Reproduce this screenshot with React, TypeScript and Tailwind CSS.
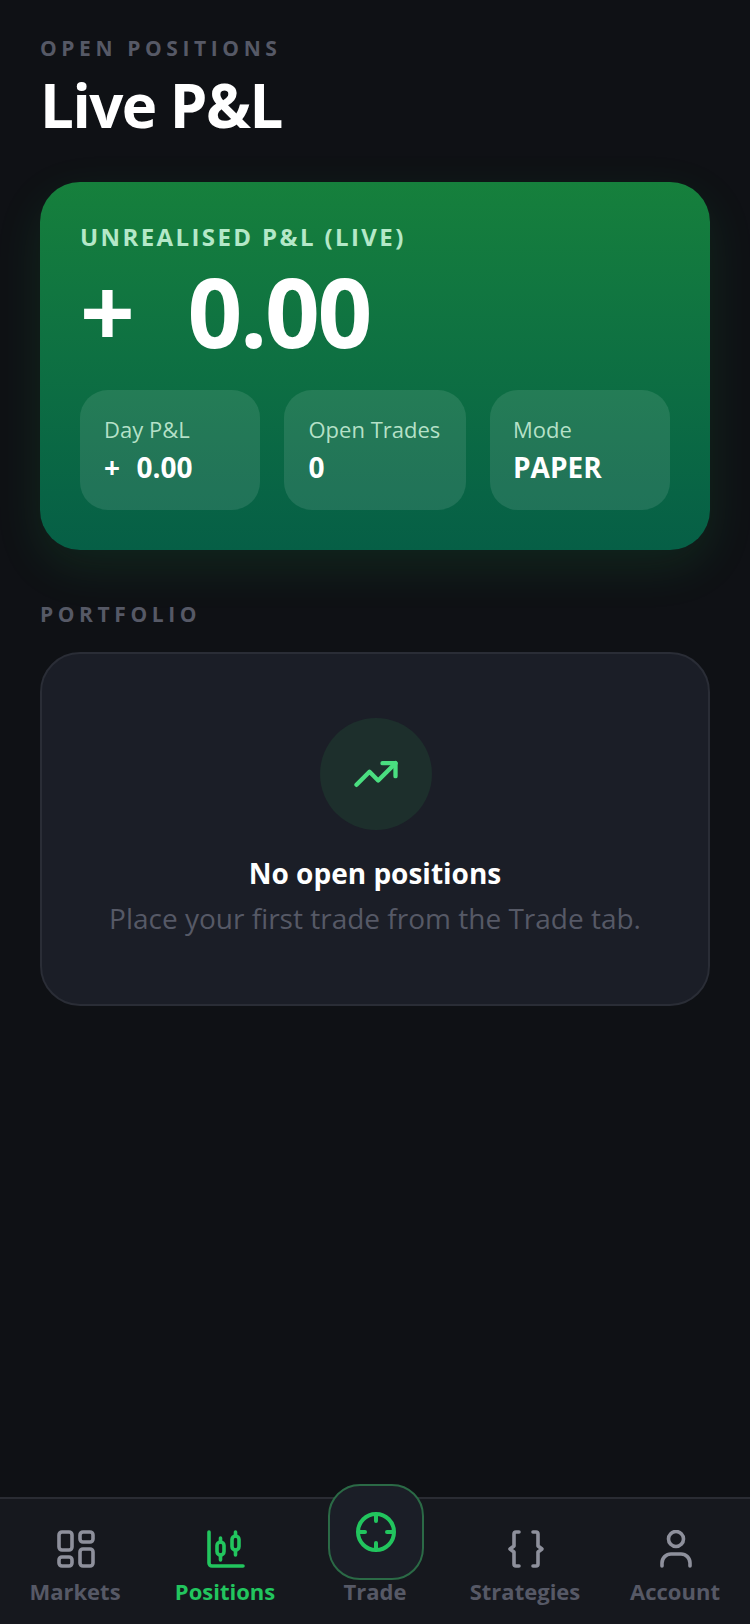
const FONT = "font-['Open_Sans','Noto_Sans',sans-serif]";

function Stat({ label, value, className }: { label: string; value: string; className: string }) {
  return (
    <div className={`h-[120px] rounded-[28px] bg-white/10 pt-[24px] ${className}`}>
      <div className="text-[22px] leading-[30px] text-[#d1f5de]/85">{label}</div>
      <div className="mt-[4px] whitespace-pre text-[28px] leading-[38px] font-bold [word-spacing:1px] text-white">{value}</div>
    </div>
  );
}

function NavItem({ label, active, width, children }: { label: string; active?: boolean; width: string; children: React.ReactNode }) {
  return (
    <div className={`flex flex-col items-center ${width}`}>
      <div className="flex h-[44px] items-center justify-center">{children}</div>
      <div className={`mt-[5px] text-[22px] leading-[30px] font-bold ${active ? "text-[#22c55e]" : "text-[#565966]"}`}>{label}</div>
    </div>
  );
}

export default function App() {
  return (
    <div className={`relative flex h-[1624px] w-[750px] flex-col overflow-hidden bg-[#0f1115] ${FONT}`}>
      <div className="flex-1 px-10 pt-[34px]">
        <div className="text-[21px] leading-[28px] font-bold tracking-[4.6px] text-[#565966]">OPEN POSITIONS</div>
        <h1 className="mt-[6px] text-[60px] leading-[74px] font-bold tracking-[-1.5px] text-white">Live P&amp;L</h1>

        <div className="mt-[40px] h-[368px] rounded-[40px] bg-gradient-to-b from-[#16803c] to-[#065f46] px-10 pt-[39px] shadow-[0_16px_48px_rgba(34,197,94,0.12)]">
          <div className="text-[24px] leading-[32px] font-bold tracking-[2.4px] text-[#b4e8c8]">UNREALISED P&amp;L (LIVE)</div>
          <div className="whitespace-pre text-[96px] leading-[116px] font-bold tracking-[-2.4px] [word-spacing:5px] text-white">+  0.00</div>
          <div className="mt-[21px] flex gap-6">
            <Stat label="Day P&L" value="+  0.00" className="w-[180px] pl-6" />
            <Stat label="Open Trades" value="0" className="w-[182px] pl-[24.5px]" />
            <Stat label="Mode" value="PAPER" className="w-[180px] pl-[23px]" />
          </div>
        </div>

        <div className="mt-[50px] text-[21px] leading-[28px] font-bold tracking-[4.6px] text-[#565966]">PORTFOLIO</div>

        <div className="mt-[24px] flex h-[354px] flex-col items-center rounded-[40px] border-2 border-[#2a2d36] bg-[#1b1e27] pt-[64px]">
          <div className="ml-[1px] flex h-[112px] w-[112px] items-center justify-center rounded-full bg-[#1d2f2c]">
            <svg width="52" height="52" viewBox="0 0 24 24" fill="none" stroke="#4ade80" strokeWidth="2" strokeLinecap="round" strokeLinejoin="round">
              <path d="M3 17l6-6 4 4 8-8" />
              <path d="M15 7h6v6" />
            </svg>
          </div>
          <div className="mt-[24px] text-[28px] leading-[38px] font-bold text-white">No open positions</div>
          <div className="mt-[8px] text-[28px] leading-[36px] text-[#565966]">Place your first trade from the Trade tab.</div>
        </div>
      </div>

      <div className="relative flex h-[127px] items-start justify-between border-t-2 border-[#2a2c33] bg-[#16181e] pt-[28px]">
        <NavItem label="Markets" width="w-[150px]">
          <svg className="ml-[2px]" width="38" height="38" viewBox="0 0 38 38" fill="none" stroke="#8e909c" strokeWidth="3.6">
            <rect x="2" y="2" width="13" height="18" rx="3" />
            <rect x="23" y="2" width="13" height="10" rx="3" />
            <rect x="2" y="27" width="13" height="9" rx="3" />
            <rect x="23" y="19" width="13" height="17" rx="3" />
          </svg>
        </NavItem>
        <NavItem label="Positions" active width="w-[150px]">
          <svg className="ml-[2px]" width="38" height="38" viewBox="0 0 38 38" fill="none" stroke="#22c55e" strokeWidth="3.6" strokeLinecap="round" strokeLinejoin="round">
            <path d="M2 2v31a3 3 0 0 0 3 3h31" />
            <rect x="10" y="12" width="7" height="13" rx="3.5" />
            <path d="M13.5 8v4M13.5 25v5" />
            <rect x="25" y="6" width="7" height="14" rx="3.5" />
            <path d="M28.5 2v4M28.5 20v5" />
          </svg>
        </NavItem>
        <NavItem label="Trade" width="w-[150px]">
          <div className="h-[44px] w-[92px]" />
        </NavItem>
        <NavItem label="Strategies" width="w-[150px]">
          <svg className="ml-[1px]" width="38" height="38" viewBox="0 0 38 38" fill="none" stroke="#8e909c" strokeWidth="3.6" strokeLinecap="round" strokeLinejoin="round">
            <path d="M12 2h-3a2 2 0 0 0-2 2v12l-4 3 4 3v12a2 2 0 0 0 2 2h3" />
            <path d="M26 2h3a2 2 0 0 1 2 2v12l4 3-4 3v12a2 2 0 0 1-2 2h-3" />
          </svg>
        </NavItem>
        <NavItem label="Account" width="w-[150px]">
          <svg className="ml-[2px]" width="38" height="38" viewBox="0 0 38 38" fill="none" stroke="#8e909c" strokeWidth="3.6" strokeLinecap="round">
            <circle cx="19" cy="9" r="7.5" />
            <path d="M5 36v-3a9 9 0 0 1 9-9h10a9 9 0 0 1 9 9v3" />
          </svg>
        </NavItem>

        <div className="absolute left-[328px] top-[-15px] flex h-[96px] w-[96px] items-center justify-center rounded-[32px] border-2 border-[#2b6a46] bg-[#1b1e27]">
          <svg width="42" height="42" viewBox="0 0 42 42" fill="none" stroke="#22c55e" strokeWidth="4" strokeLinecap="round">
            <circle cx="21" cy="21" r="18" />
            <path d="M21 4v6M21 32v6M4 21h6M32 21h6" />
          </svg>
        </div>
      </div>
    </div>
  );
}
